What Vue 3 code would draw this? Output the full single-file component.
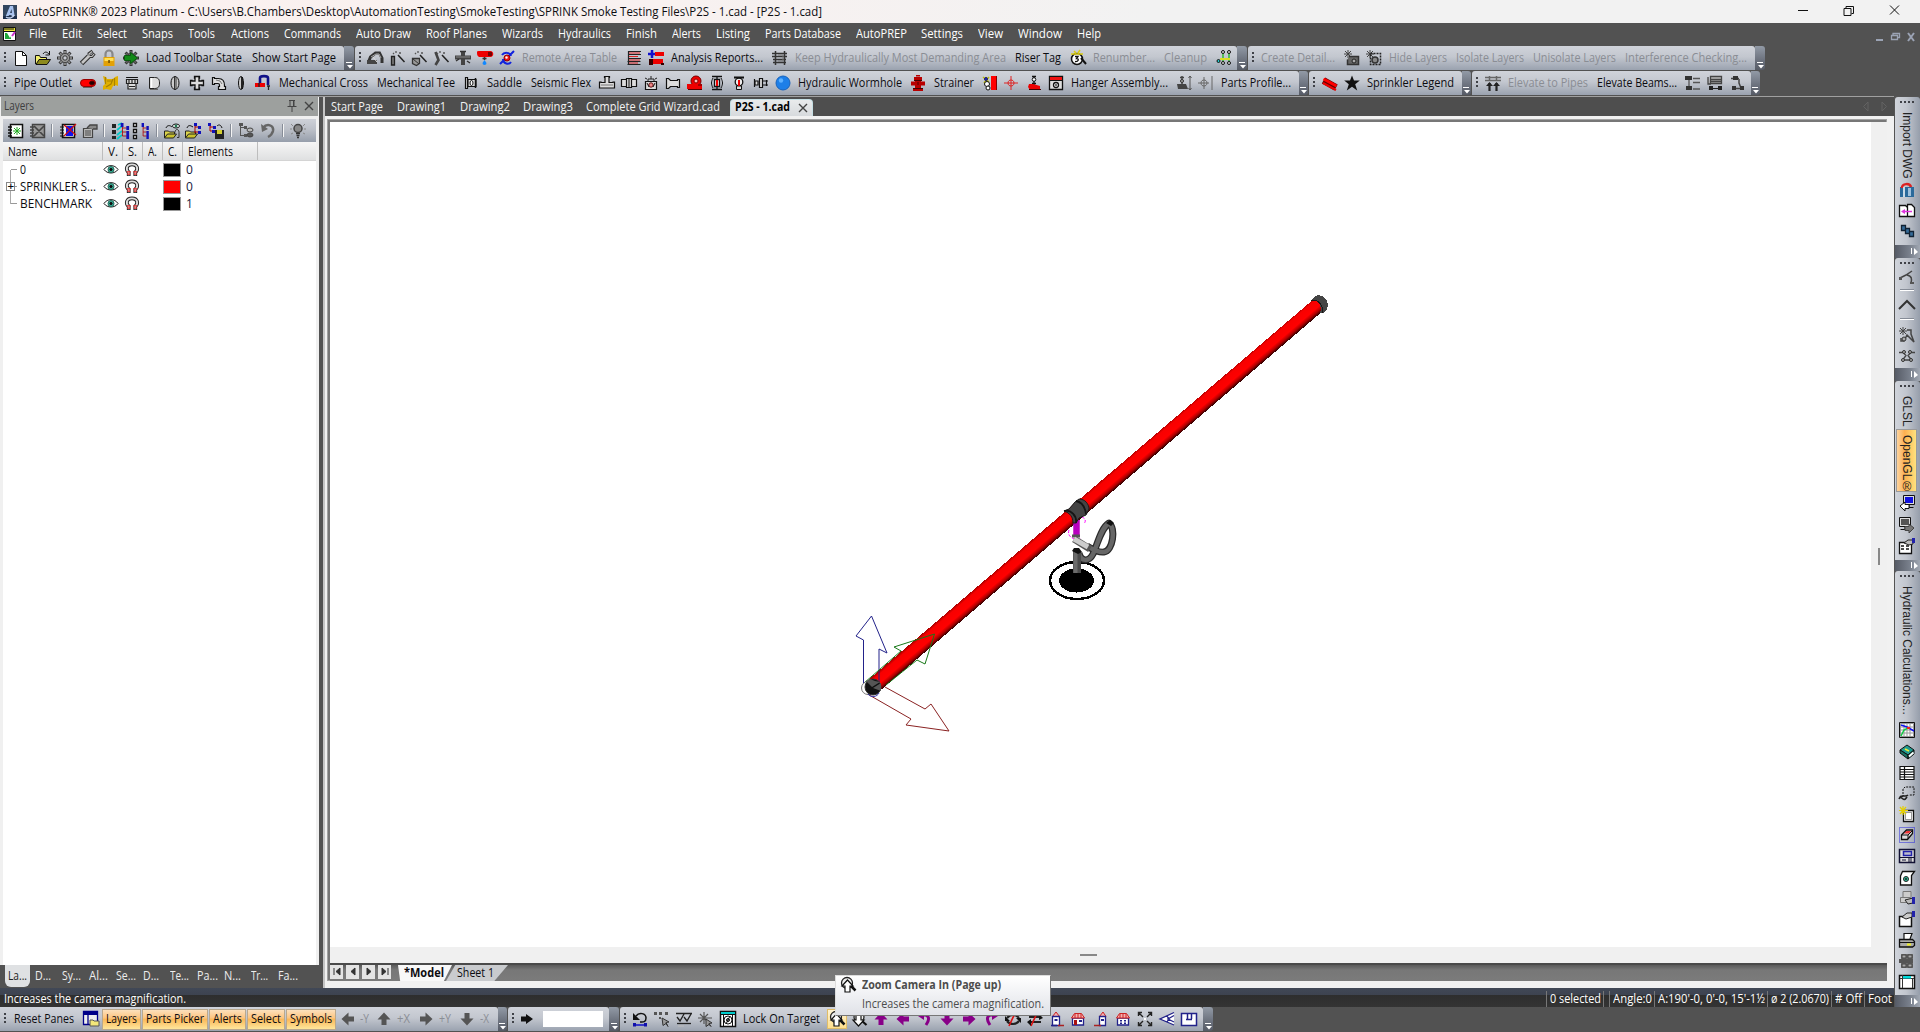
<script setup>
const vFit = {
  mounted(el, { value }) {
    const natural = el.getBoundingClientRect().width
    if (natural) el.style.transform = `scaleX(${value / natural})`
  },
}

const p = (d, f = 'none', s = '#111', w = 1) => `<path d="${d}" fill="${f}" stroke="${s}" stroke-width="${w}"/>`
const b = (d, f = '#111') => `<path d="${d}" fill="${f}"/>`
const c = (x, y, r, f = 'none', s = '#111', w = 1) => `<circle cx="${x}" cy="${y}" r="${r}" fill="${f}" stroke="${s}" stroke-width="${w}"/>`
const e = (x, y, rx, ry, f = 'none', s = '#111') => `<ellipse cx="${x}" cy="${y}" rx="${rx}" ry="${ry}" fill="${f}" stroke="${s}"/>`

const gear = (col, hole) => p('M8 0V16M0 8H16M2.500 2.500L13.500 13.500M13.500 2.500L2.500 13.500', 'none', '#333', 3) + p('M8 1V15M1 8H15M3.200 3.200L12.800 12.800M12.800 3.200L3.200 12.800', 'none', col, 1.600) + c(8, 8, 4.600, col, '#333', .8) + c(8, 8, 2.200, hole, '#333')
const wand = p('M7 1v2M10 3h2M4 3l1 1', 'none', '#555', 1.300) + p('M9 5l6.500 7', 'none', '#222', 1.500)
const tree = (col) => p('M3.500 2v11M3.500 5h6M3.500 9h6M3.500 13h6', 'none', '#a00') + b('M1 0h4v4H1zM9 3h4v4H9zM9 8h4v4H9zM9 12h4v4H9z', col)
const folder = p('M.500 15v-7h4l1 1h5v2', '#dcd44a', '#222') + p('M.500 15l3-4h9l-3 4z', '#c9c22e', '#222')
const arrow = (deg, col) => `<g transform="rotate(${deg} 8 8)">` + b('M8 1.500l6.500 7h-4v5.500h-5V8.500h-4z', col) + '</g>'
const house = (x) => p('M2.500 7h11v7h-11z', '#fff', '#22228a', 1.300) + p('M1.500 7l3-4.500h7l3 4.500z', '#f5b0b0', '#c22') + p('M5 3v4M8 3v4M11 3v4', 'none', '#c22') + b(x, '#22228a')
const monitor = (col) => p('M4.500 .5h11v9h-11z', '#ddd') + b('M6 2h8v6H6z', col) + p('M10 10v2M6.500 12.500h8')

const icons = {
  app: b('M1 1h14v14H1z', '#34465f') + b('M3 14L8 2h3l2 12h-3l-.5-3H7l-1 3zM8 9h2l-.5-4z', '#a9c2ee') + b('M1 12h14v3H1z', '#1c2d4a') + p('M4 13c3 2 7 1 8-2', 'none', '#c8d6f2', 1.500),
  doc: p('M1.500 4.500h12v10h-12z', '#fff') + p('M1.500 1.500h12v4h-12z', '#e8e332') + b('M3 7h6v6H3z', '#1fa83a') + b('M5 7h6L8 12z', '#fff') + p('M13 6l-3 4', 'none', '#c3c', 2) + p('M3 2v2M5 2v2M7 2v2M9 2v2M11 2v2'),
  new: p('M2.500 1.500h7l4 4v10h-11z', '#fff') + p('M9.500 1.500v4h4'),
  open: p('M.5 14V5.500h4l1 2h6V10', '#f2ee6c') + p('M1 14.500l3-5h11.500l-3.500 5z', '#8d8a1d') + p('M8 4c2-3 4-2 6 0M14.500 1v4h-4'),
  gear: gear('#999', '#c6cad0'),
  wrench: p('M2.500 13.500l7-7', 'none', '#333', 5) + p('M13.500 1L10 3.500v3h3L15.500 3.500', 'none', '#333', 3) + p('M3 13l7-7', 'none', '#c4c4c4', 2.600) + p('M13 1.500L10 4v2.500h3L15 4', 'none', '#c4c4c4', 1.200),
  lock: p('M4.500 8V4a3.500 3.500 0 017 0v4', 'none', '#888', 2.200) + b('M2.500 7h11v9h-11z', '#e3a106') + b('M3.500 8h9v3h-9z', '#ffdf54') + b('M7.300 10h1.500v3h-1.500z', '#6b4b00'),
  gearGo: gear('#666', '#888') + p('M1.500 5.500h6V2.500L14.500 8l-7 5.500v-3h-6z', '#128a18', '#0b5a10'),
  arch: p('M1.500 12L3.500 7l5-4h4l2.500 5v5', 'none', '#333', 3) + p('M4 7l5-3h3l2 4', 'none', '#aaa') + b('M0 10h10v4H0z', '#444') + p('M6 7l4 5', 'none', '#ddd'),
  wandPipe: p('M2.500 6.500h3v8.500h-3z', '#777', '#222', 1.300) + wand,
  wandBox: p('M1.500 8.500h7v5l-3 2-4-2z', '#999', '#333', 1.300) + p('M2 9l6 5', 'none', '#333') + wand,
  wandBend: p('M2.500 15l3-5-3-8', 'none', '#444', 2.600) + wand,
  cross3: p('M8 1v14M0 7.500h16', 'none', '#444', 4) + p('M1 7h14', 'none', '#888') + p('M5 1.500h6M1 11l3-2M12 11l3 2', 'none', '#333', 1.500),
  drip: b('M0 1.500A2.500 2.500 0 012 1h12c3 1 3 5 0 6H2C0 6 0 4 0 2z', '#e00') + b('M11 2h4v4h-4z', '#700') + p('M7.500 7v3M5.500 8.500h4', 'none', '#333', 1.500) + b('M7.500 10l2 3a2 2 0 01-4 0z', '#18f'),
  node: p('M1 14L6 9M10 6l5-5M3 5c2-3 8-3 9 1M4 9c0 5 6 6 8 3', 'none', '#12d', 2) + c(8, 8, 3, '#e11', '#900') + c(7.500, 7.500, 1, '#fff', '#fbb'),
  table: p('M2 1.500h13M2 4.500h13M2 8.500h13M1.500 11.500h13M1.500 14.500h13M2.500 1v13', 'none', '#222', 1.200) + p('M3 3h11M3 6.500h9M3 10h11M3 13h9', 'none', '#d22'),
  plus: p('M4 0v8M0 4h8', 'none', '#11c', 2.500) + b('M7 2h9v4H7zM1 9h14v5H1z', '#e00') + b('M1 9h4v6H1zM13 13h3v2h-3z', '#300'),
  grid: p('M3.500 1v14M12.500 1v14M0 3.500h15M0 6.500h15M1 9.500h13M1 12.500h13', 'none', '#333', 1.500) + p('M6 5h5v6H6', 'none', '#777'),
  tag: c(7, 9, 5.500, '#fff', '#111', 1.500) + p('M5 6.500h3l-1.500 2c3 0 2 3.500-1.500 3', 'none', '#111', 1.300) + p('M11 8l5 6', 'none', '#111', 2) + p('M4 1l2 2M10 0L8 3M1 4h12', 'none', '#d9cc10', 1.500),
  valves: p('M6 3v9M12 3v9', 'none', '#3b3', 1.500) + p('M3 9h10', 'none', '#dd2', 2) + c(6, 2, 1.500, '#ddd') + c(12, 2, 1.500, '#ddd') + c(6, 13, 1.500, '#ddd') + c(12, 13, 1.500, '#ddd') + c(1.500, 11, 1.500, '#2cc'),
  starBox: p('M4 0v8M0 4h8M1 1l6 6M7 1L1 7', 'none', '#444') + p('M5 6.500h9.500v8H3.500v-5', '#666', '#333', 1.500) + c(10, 11, 2, '#aaa', '#222'),
  starSel: p('M4 0v8M0 4h8M1 1l6 6M7 1L1 7', 'none', '#444') + '<path d="M4.500 3.500h10v11h-10z" fill="none" stroke="#222" stroke-dasharray="2 1" stroke-width="1.500"/>' + c(9, 10, 3, '#888', '#333', 1.500),
  pipe: '<rect x=".5" y="4.500" width="15" height="7" rx="3.500" fill="#f00" stroke="#900"/>' + e(12, 8, 2.500, 2, '#200', '#500') + p('M3 12.500h9', 'none', '#666'),
  ytee: b('M1 1l3 1 1 2h6l2-2 3-1v10l-3-1-2 1-2 4-5-1-3 1V11l2-2z', '#e0b000') + p('M3.500 2v7M12.500 3v8M4 12l5-3 2-5M5 6h5', 'none', '#a98200', 1.200),
  cap: p('M2.500 4.500h11v4h-11zM4 9v5h8V9M2 2.500h12M5 5v3M8 5v3M11 5v3M5 11.500h6', '#ddd', '#222', 1.200) + p('M3 2.500h10'),
  plug: p('M3.500 2.500h5c4 0 5 2 5 5.500s-1 5.500-5 5.500h-5z', '#ddd', '#222') + p('M5.500 3v10', 'none', '#fff', 1.500) + p('M4 14.500h8', 'none', '#666'),
  ring: e(8, 8, 4, 6.500, '#ccc') + p('M7.500 2v12M9 2v12', 'none', '#333'),
  fcross: p('M5.500 1.500h5V3H10v3h3v-.5h1.500v5H13V10h-3v3h.5v1.500h-5V13H6v-3H3v.5H1.500v-5H3V6h3V3h-.5z', '#ddd', '#111', 1.300),
  elbow: p('M1.500 2.500h2v1h4c4 0 6 3 6 7v1h1v3h-7v-3h1V10C8.500 9 8 8.500 7 8.500H3.500v1h-2z', '#ddd', '#111', 1.200) + p('M5 5l4 1 2 3', 'none', '#777'),
  flange: e(8, 8, 2.500, 6.500, '#ccc') + p('M9 2v12', 'none', '#111', 1.800),
  hook: p('M5 8V3c0-2.500 8-2.500 8 0v7', 'none', '#118', 2.600) + b('M0 8h10v4H0z', '#e00') + p('M4 8v4M12 11h3M13.500 11v4', 'none', '#222', 1.300),
  saddle: p('M2.500 2.500h2v11h-2zM5 4.500h8v7H5z', '#ddd', '#111', 1.200) + p('M12.500 3v10', 'none', '#111', 1.500) + e(8.500, 8, 1.500, 2.500, '#fff'),
  tee: p('M5.500 1.500h5v1H10v5h4v-.5h1.500v6h-15V7H2v.5h4v-5h-.5z', '#ddd', '#111', 1.200) + p('M2 10h12', 'none', '#777'),
  coup: p('M.5 4.500h5v7h-5zM5.500 3.500h5v9h-5zM10.500 4.500h5v7h-5z', '#ddd', '#111', 1.200) + p('M8 4v8'),
  valve: p('M2.500 6.500h11v8h-11z', '#ddd', '#111', 1.200) + p('M5 6V4h6v2M8 4V1M2 3l2 1M14 3l-2 1', 'none', '#222') + c(8, 10, 2.200, '#e88', '#611') + p('M4 8l2 4M12 8l-2 4'),
  reducer: p('M1.500 3.500h2l2 2h7v-1h2v8h-2v-1h-7l-2 2h-2z', '#ddd', '#111', 1.200),
  pump: c(9, 6, 5, '#e00', '#700') + b('M0 9h15v5H0z', '#e00') + p('M1 14.500h14M11 10h4', 'none', '#500') + c(9, 6, 2, '#fbb', '#800'),
  sprk: p('M3 1.500h10M8 1v3M5.500 4.500h5v7h-5zM8 11v3M3 14.500h10', '#eee', '#111', 1.300) + p('M8 5v6', 'none', '#e00', 2) + p('M4 3c-2 4-2 6 0 10M12 3c2 4 2 6 0 10'),
  sprk2: p('M3 2.500h10M8 2v2', 'none', '#111', 2) + c(8, 7, 3.800, '#eee', '#111', 1.300) + p('M5.500 11h5v3.500h-5z', '#ddd') + p('M8 5v6', 'none', '#e00', 2),
  nipple: p('M1.500 4v8M2 6h3v4H2zM6.500 3.500h3v9h-3zM10 6h5M10 10h5M13.500 5v6', '#ddd', '#111', 1.200),
  ball: c(8, 8, 7, '#1d7fe8', '#1763bd') + c(6, 5.500, 2.200, '#5db1ff', 'none'),
  hydrant: b('M6 0h4v1.500H6zM4 2h8v3H4zM5 5h6v8H5zM3 13h10v3H3zM1 6.500h14v4H1z', '#b80000') + p('M4 5.500h8M8 7v3M3 13.500h10', 'none', '#400'),
  wallsp: b('M9 1h5v14H9z', '#f00') + p('M14.500 1v14', 'none', '#800') + p('M1 2l6 5M7 2L2 8', 'none', '#bb0', 1.500) + c(5, 9, 2.500, '#fff') + c(4, 4, 1.500, '#22c', '#225') + c(6, 13, 2, '#fff'),
  target: p('M8 1v14M1 8h14M5 8c0-4 6-4 6 0s-6 4-6 0', 'none', '#d22'),
  valveR: p('M8 1v9M6 1.500h4M6 8.500h4', 'none', '#111', 1.300) + c(8, 4.500, 1.800, '#fff') + b('M3 9l4 0 7 2v4H4L2 12z', '#e00') + p('M3 14.500h12', 'none', '#400'),
  hangWin: p('M1.500 1.500h13v13h-13z', '#ddd', '#111', 1.300) + b('M2 2h12v3H2z', '#e11') + p('M1 5.500h14') + c(8, 10, 2.500, '#fff', '#111', 1.300) + c(8, 10, .5),
  hangDim: p('M6 1v9M4 2.500h4', 'none', '#444', 1.500) + c(6, 6, 1.500, '#aaa', '#333') + b('M1 9h9l2 5H2z', '#444') + p('M14 1v14M12.500 3l1.500-2 1.500 2M12.500 13l1.500 2 1.500-2', 'none', '#555'),
  crossDim: p('M6 2v12M0 8h11M3 8c0-4 6-4 6 0s-6 4-6 0M14 1v14', 'none', '#666'),
  redBeam: p('M1.500 5.500l12.500 7', 'none', '#600', 7) + p('M1.500 4l13 7', 'none', '#f00', 3) + p('M1 8l13 7', 'none', '#e00', 2),
  star: b('M8 .5l2 5h5.800l-4.600 3.700 2 6.300-5.200-3.800-5.200 3.800 2-6.300L.2 5.500H6z'),
  elev: p('M0 2.500h16M0 5.500h16M4.500 1v5M11.500 1v5', 'none', '#666', 1.500) + p('M4.500 8v8M11.500 8v8', 'none', '#222', 2.200) + b('M1 11l3.500-4L8 11zM8 11l3.500-4 3.500 4z', '#222'),
  list1: b('M0 1h7v4H0zM1 11h6v4H1z', '#333') + p('M8 3.500h7M8 7.500h7M8 14h7M4 5v6', 'none', '#555', 1.300),
  list2: p('M3.500 1.500h11v7h-11zM4 4.500h10M4 6.500h10M1 2v7h3', '#bbb', '#444', 1.300) + p('M3 13.500h10', 'none', '#222') + b('M2 11h4v4H2zM11 11h4v4h-4z', '#222'),
  list3: p('M2 3.500h8M10 4v4l2 5M5 13.500h9', 'none', '#444', 1.500) + b('M4 1h5v4H4zM3 11h4v4H3zM11 11h4v4h-4z', '#333'),
  layNew: p('M2.500 1.500h12v13h-12z', '#fff', '#111', 1.500) + p('M0 4h4M0 7h4M0 10h4M0 13h4', 'none', '#111', 1.300) + p('M9 4v8M5 8h8M6 5l6 6M12 5l-6 6', 'none', '#2a2'),
  layDel: p('M2.500 1.500h12v13h-12z', '#999', '#444', 1.500) + p('M0 4h4M0 7h4M0 10h4M0 13h4M4 3l10 10M14 3L4 13', 'none', '#444', 1.700),
  layBlue: p('M2.500 1.500h12v13h-12z', '#eee', '#111', 1.500) + b('M6 3h7v10H6z', '#11e') + p('M4 2l12 10M16 1L4 13', 'none', '#c11', 1.300) + p('M0 4h4M0 7h4M0 10h4M0 13h4'),
  props: p('M1.500 5.500h9v9h-9zM3 8h6M3 10h6M3 12h6', '#bbb', '#444', 1.200) + p('M5 5l3-3h7v4h-4', '#888', '#444', 1.300),
  chk: p('M6 2l4-2M5 7l5-4M5 12l5-4M5 16l5-4', 'none', '#0cc', 1.700) + b('M0 1h4v4H0zM0 7h4v4H0zM0 13h4v3H0z', '#222') + '<g transform="translate(8 0) scale(.7 1)">' + tree('#11b') + '</g>',
  lst: p('M.5 .5h3v3h-3zM.5 6.500h3v3h-3zM.5 12.500h3v3h-3z', '#fff', '#111', 1.300) + '<g transform="translate(8 0) scale(.6 1)">' + tree('#11b') + '</g>',
  foldEye: folder + p('M2 5c1-3 4-3 6-1') + e(12, 3, 3.500, 2, '#fff') + c(12, 3, 1, '#2a6', '#164') + p('M11 9.500c0-4 4-4 4 0v5h-2', 'none', '#333'),
  foldTree: folder + p('M2 5c1-3 3-3 6-1') + p('M10 2v8M10 4h4M10 9h4', 'none', '#a00') + b('M9 0h3v3H9zM13 3h3v3h-3zM13 8h3v3h-3z', '#11b'),
  saveTree: p('M2 1v7M2 4h4M2 8h4', 'none', '#a00') + b('M0 0h3v3H0zM5 3h3v3H5zM4 7h3v3H4z', '#11b') + b('M7 7h9v9H7z', '#222') + b('M9 7h5v4H9z', '#d4cf30') + p('M9 3c2-2 4-1 5 2'),
  treeEye: p('M2.500 1v12M2 4.500h5M2 12.500h5', 'none', '#555') + b('M1 0h4v3H1zM6 3h3v3H6zM6 11h3v3H6z', '#555') + e(12, 7, 3, 2, '#bbb', '#444') + e(12, 12, 3, 2, '#555', '#444'),
  undoG: p('M3 5c4-5 11-3 10 3-1 4-3 5-5 6', 'none', '#666', 2.500) + b('M1 1l1 8 6-3z', '#666'),
  bulb: c(8, 5.500, 4, '#888', '#444', 1.500) + p('M6 10.500h4M6.500 12.500h3M7 14.500h2', 'none', '#333', 1.500) + p('M1 1l2 2M15 1l-2 2M0 6h2M14 6h2M1 11l2-1M15 11l-2-1', 'none', '#888'),
  eye: p('M.5 8C4 2.500 12 2.500 15.500 8 12 13 4 13 .5 8z', '#fff') + c(8, 8, 3.200, '#3cb8a0', '#186050') + c(8, 8, 1.300, '#111'),
  magnet: p('M4.500 15V11C1 8 2 2.500 8 2.500s7 5.500 3.500 8.500v4', 'none', '#222', 4) + p('M4.500 14V11C1 8 2 2.500 8 2.500s7 5.500 3.500 8.500v3', 'none', '#ddd', 2) + p('M2.500 10.500h4M9.500 10.500h4M3 13h3M10 13h3', 'none', '#e22', 1.300),
  pin: p('M5 2.500h6M6 2.500v6M10 2.500v6M3.500 8.500h9M8 9v5M9.500 3v5', 'none', '#444'),
  x: p('M4 4l8 8M12 4l-8 8', 'none', '#444', 1.400),
  dwg: b('M1 5h14v10H1z', '#2b6a9b') + b('M9 6h3v8H9z', '#9fc0dc') + p('M3 6c0-5 8-5 9-1', 'none', '#d22', 2.500) + p('M5 5v10', 'none', '#fff', 1.500),
  pages: p('M.5 2.500h6l2 2v9h-8zM8.500 1.500h4l3 3v9h-7z', '#fff', '#111', 1.300) + p('M4 8.500h9', 'none', '#d3d', 1.500) + b('M6 6v5L2 8.500z', '#d3d'),
  boxes: p('M2.500 2.500h4v5h-4zM6.500 5.500h4v5h-4zM10.500 8.500h4v5h-4z', '#356b99', '#123', 1.300),
  bend: p('M1 9l6-3 6-4M8 6c5 1 5 4 4 8', 'none', '#444', 1.500) + b('M0 8h3v3H0zM11 13h4v2h-4z', '#555'),
  chevUp: p('M0 13l8-8 8 8', 'none', '#333', 2),
  magic: p('M4 0v8M0 4h8M1 1l6 6M7 1L1 7', 'none', '#444') + p('M8 3h4v4l3 8-7-7-3 6H2v-3', 'none', '#444', 1.500) + c(5, 12, 2, '#aaa', '#333'),
  nodes: p('M0 4.500h4l3 3-3 4M16 4.500h-4l-3 3 3 4M4 12h8', 'none', '#444', 1.300) + c(5, 4, 1.500, '#aaa', '#333') + c(11, 4, 1.500, '#aaa', '#333') + c(4, 12, 1.500, '#aaa', '#333') + c(12, 12, 1.500, '#aaa', '#333'),
  monL: monitor('#11d') + p('M1 11l5-4v2.500h4v4H6V16z', '#fff'),
  monR: `<g transform="translate(16 0) scale(-1 1)">${monitor('#555')}${p('M1 11l5-4v2.500h4v4H6V16z', '#777', '#444')}</g>`,
  formHand: p('M.5 4.500h12v11H.500zM2 8h3M2 11h3M7 8h3M7 11h3', '#fff', '#111', 1.300) + p('M5 5l4-3h5v4l-4 1z', '#bbb', '#222') + b('M13 0h3v5h-3z', '#22a'),
  chart: p('M1.500 1.500h13v13h-13zM1 5h14M1 8h14M1 11h14M5 1v14M8 1v14M11 1v14', '#fff', '#999') + p('M.5 .5h15v15H.500z', 'none', '#111') + p('M2 3l6 2 7 4', 'none', '#11e', 1.500) + p('M2 14l3-6 4-2', 'none', '#1c4', 1.500) + b('M8 5h3v2H8z', '#e22'),
  book: p('M1 6l7-5 7 5-6 5z', '#1f9a90') + p('M1 6v3l8 6v-4zM9 11v4l6-5V6z', '#187060', '#111') + p('M6 5l4 2', 'none', '#ee3', 1.800) + p('M10 12.500l4.500-4', 'none', '#fff', 1.800),
  sheet: p('M1 1.500h14v13H1zM1 4.500h14M1 7h14M1 9.500h14M1 12h14M5.500 1v14', '#fff', '#111', 1.200),
  lasso: '<path d="M4 9V4l2-2h9v8h-5" fill="none" stroke="#111" stroke-dasharray="2 1"/>' + p('M0 14c3-6 6-1 9-4M1 11c4 5 5 4 7 1', 'none', '#222', 1.600),
  newSel: p('M4.500 4.500h10v11h-10z', '#fff', '#111', 1.300) + '<path d="M6.500 6.500h6v7h-6z" fill="none" stroke="#333" stroke-dasharray="1 1"/>' + p('M4 0v9M0 4.500h9M1 1l6 7M7 1L1 8', 'none', '#e5cf00', 1.200),
  eraser: '<path d="M.5 .5h15v15H.500z" fill="none" stroke="#22d" stroke-dasharray="1 1"/>' + p('M2.500 8l5-5h6v3.500l-5 6h-6z', '#ddd', '#111', 1.300) + b('M5 6.500l2.500-2.500H12L10 6.500z', '#e33') + p('M3 8h6l4-4M9 8v4'),
  fax: p('M.5 1.500h15v13H.500z', '#ddd', '#113', 1.500) + p('M4.500 3.500h8v4h-8z', '#bbc', '#22a', 1.500) + p('M0 9.500h16M3 12h4M9 11h4M9 13h4', 'none', '#113', 1.200),
  pageEye: p('M3.500 1.500h12l-3 4v9.500h-11v-9z', '#fff', '#111', 1.300) + c(7, 9, 2.500, '#3b9', '#222') + c(7, 9, .6),
  printHand: p('M4 7V1.500h8V7M1.500 7.500h10v5h-10z', '#ccc', '#777') + p('M6 10l3 4 5-1V8z', '#bbb', '#222') + b('M13 7h3v7h-3z', '#22a'),
  propHand: p('M.5 5.500h12v10H.500z', '#fff', '#111', 1.500) + p('M3 6l5-4h5v4l-6 2z', '#ccc', '#222') + b('M13 0h3v6h-3z', '#22a'),
  printer: p('M5 7V1.500h8L11 7', '#fff', '#111', 1.200) + p('M.5 7.500h13l2 2v4l-2 1.500H.500z', '#aaa', '#111', 1.300) + p('M0 10.500h15') + b('M8 11.500h4v2H8z', '#ee2'),
  plugs: b('M2 1h12v14H2z', '#666') + p('M3 2h4v3H3zM9 2h4v3H9zM3 11h4v3H3zM9 11h4v3H9z', '#aaa', '#444') + b('M0 6h14v4H0z', '#555'),
  win: p('M.5 1.500h15v13H.500z', '#fff', '#111', 1.500) + p('M3.500 1v13M13.500 4v10M1 4.500h14', 'none', '#333') + b('M4 2h8v2.500H4z', '#0dd'),
  panes: p('M.5 .5h14v13H.500zM5 3v10', '#eee', '#008', 1.300) + b('M1 1h13v3H1z', '#008') + p('M7 15V9h3l1 1h5v5z', '#f3e77a', '#555'),
  left: arrow(-90, '#555'), up: arrow(0, '#555'), right: arrow(90, '#555'), down: arrow(180, '#555'),
  go: b('M2 5.500h5V3l7 5-7 5v-2.500H2z'),
  mUp: arrow(0, '#808'), mLeft: arrow(-90, '#808'), mDown: arrow(180, '#808'), mRight: arrow(90, '#808'),
  mBack: p('M4 5c7-3 10 2 5 9', 'none', '#808', 3) + b('M1 5l6-4v8z', '#808'),
  mFwd: p('M12 5C5 2 2 7 7 14', 'none', '#808', 3) + b('M15 5L9 1v8z', '#808'),
  undo: p('M4 5c3-4 10-3 10 2s-4 4-6 4', 'none', '#111', 1.500) + b('M1 2v7h7z') + p('M2 14h12', 'none', '#11c', 1.500) + b('M1 12h3v3.500H1zM12 12h3v3.500h-3z', '#11a'),
  dots: b('M0 1h3v3H0zM5 1h3v3H5zM11 1h3v3h-3zM5 6h2v2H5z', '#555') + p('M8 7l7 4-3 .5 2 4-2-3-3 2z', '#999', '#333'),
  checks: p('M0 2.500h16M1 6l3 4 4-7M8 6l3 4 4-7', 'none', '#222', 1.300) + p('M1 12.500h14', 'none', '#222', 1.300) + p('M2 15h6', 'none', '#bbb'),
  burst: p('M6 1v12M0 7h14M2 3l8 8M10 3l-8 8', 'none', '#555', 1.200) + p('M8 8l6 4-3 .5 2 3-2-2-3 2z', '#999', '#333'),
  lockOn: p('M.5 .5h15v15H.500z', '#fff', '#111', 1.500) + b('M1 1h14v2H1z', '#0cc') + p('M3.500 3v12M12.500 3v12M1 3.500h14') + e(8, 9, 4, 4) + c(8, 9, 1.500, '#999') + p('M10 5l-4 8'),
  zoomIn: c(7, 6, 5.500, '#eee', '#222', 1.300) + p('M11 9l4.500 4.500', 'none', '#111', 2.500) + p('M7.500 3l5.500 6h-3v6H5V9H2z', '#fff', '#111', 1.200),
  zoomOut: c(8, 6, 5, '#eee', '#222', 1.300) + p('M11 10l4.500 4', 'none', '#111', 2.200) + p('M7.500 15l5.500-6h-3V4H5v5H2z', '#fff', '#111', 1.200),
  rotA: p('M2 7c3-4 9-4 12 0M14 10c-3 4-9 4-12 0', 'none', '#222', 2.200) + p('M11 0L4 15', 'none', '#d11', 1.600) + b('M0 5v5h5zM16 12V7h-5z'),
  rotB: p('M2 6h11M3 11h11', 'none', '#222', 2.200) + p('M11 0L4 15', 'none', '#d11', 1.600) + b('M12 3l4 4-4 2zM4 8l-4 3 4 4z'),
  h1: p('M4.500 5.500l3.500-4.500 3.500 4.500z', '#f5b0b0', '#c22') + p('M4.500 5.500h7v9h-7z', '#fff', '#22228a', 1.300) + b('M6.500 8h3v2h-3z', '#22228a') + p('M3 14.500h6', 'none', '#22228a', 1.500) + p('M10 14.500h6', 'none', '#a22', 1.500),
  h2: house('M9 9h3v2H9z') + b('M4 9h3v5H4z', '#a11'),
  h3: p('M6.500 5.500L10 1l3 4.500z', '#f5b0b0', '#c22') + p('M6.500 5.500h6v9h-6z', '#fff', '#22228a', 1.300) + b('M8 8h3v2H8z', '#22228a') + p('M1 14.500h7', 'none', '#a22', 1.500),
  h4: house('M5 9h2v1.500H5zM9 9h2v1.500H9zM5 11.500h2V13H5zM9 11.500h2V13H9z'),
  extents: p('M1.500 5V1.500H5M11 1.500h3.500V5M14.500 11v3.500H11M5 14.500H1.500V11M2 2l4 4M14 2l-4 4M2 14l4-4M14 14l-4-4', 'none', '#222', 1.400) + b('M7 7h2v2H7z', '#fff'),
  iso: p('M15 1.500L1 8l14 6M15 4.500L9 8l6 3M8 5l2 3-2 3', '#fff', '#22228a', 1.300),
  plan: p('M.5 2.500h15v12H.500zM6.500 2v6M5 8.500h6M10.500 2v6', '#fff', '#22228a', 1.500),
}

const I = (n, at, z = 16) => ({ n, a: at - z / 2, z: at + z / 2 })
const T = (s, a, z, cls = '') => ({ s, a, z, cls })
const S = (at) => ({ sep: true, a: at, z: at + 1 })
const lay = (start, items) => {
  let cur = start
  return items.map((it) => {
    const o = { ...it, gap: it.a - cur, size: it.z - it.a }
    cur = it.z
    return o
  })
}
const bar = (a, z, cap, items) => ({ w: z - a, cap, items: lay(a + 9, items) })
const seq = (names, xs) => names.split(' ').map((n, i) => I(n, xs[i]))

const menu = lay(0, [I('doc', 10), T('File', 29, 47), T('Edit', 62, 82), T('Select', 97, 127), T('Snaps', 142, 173), T('Tools', 188, 215), T('Actions', 231, 269), T('Commands', 284, 341), T('Auto Draw', 356, 411), T('Roof Planes', 426, 487), T('Wizards', 502, 543), T('Hydraulics', 558, 611), T('Finish', 626, 657), T('Alerts', 672, 701), T('Listing', 716, 750), T('Parts Database', 765, 841), T('AutoPREP', 856, 907), T('Settings', 921, 963), T('View', 978, 1003), T('Window', 1018, 1062), T('Help', 1077, 1101)])

const row1 = [
  bar(0, 344, 10, [...seq('new open gear wrench lock gearGo', [21, 43, 65, 87, 109, 131]), T('Load Toolbar State', 146, 242), T('Show Start Page', 252, 336)]),
  bar(355, 1237, 10, [...seq('arch wandPipe wandBox wandBend cross3 drip node', [375, 397, 419, 441, 463, 485, 507]), T('Remote Area Table', 522, 617, 'dim'), I('table', 634), I('plus', 656), T('Analysis Reports...', 671, 763), I('grid', 780), T('Keep Hydraulically Most Demanding Area', 795, 1006, 'dim'), T('Riser Tag', 1015, 1061), I('tag', 1078), T('Renumber...', 1093, 1155, 'dim'), T('Cleanup', 1164, 1207, 'dim'), I('valves', 1225)]),
  bar(1248, 1755, 10, [T('Create Detail...', 1261, 1335, 'dim'), I('starBox', 1352), I('starSel', 1374), T('Hide Layers', 1389, 1447, 'dim'), T('Isolate Layers', 1456, 1524, 'dim'), T('Unisolate Layers', 1533, 1616, 'dim'), T('Interference Checking...', 1625, 1747, 'dim')]),
]
const row2 = [
  bar(0, 1299, 9, [T('Pipe Outlet', 14, 72), ...seq('pipe ytee cap plug ring fcross elbow flange hook', [88, 110, 132, 154, 175, 197, 219, 241, 263]), T('Mechanical Cross', 279, 368), T('Mechanical Tee', 377, 455), I('saddle', 471), T('Saddle', 487, 522), T('Seismic Flex', 531, 591), ...seq('tee coup valve reducer pump sprk sprk2 nipple ball', [607, 629, 651, 673, 695, 717, 739, 761, 783]), T('Hydraulic Wormhole', 798, 902), I('hydrant', 918), T('Strainer', 934, 974), ...seq('wallsp target valveR hangWin', [990, 1011, 1034, 1056]), T('Hanger Assembly...', 1071, 1168), I('hangDim', 1184), I('crossDim', 1206), T('Parts Profile...', 1221, 1291)]),
  bar(1309, 1462, 9, [I('redBeam', 1330), I('star', 1352), T('Sprinkler Legend', 1367, 1454)]),
  bar(1472, 1751, 9, [I('elev', 1493), T('Elevate to Pipes', 1508, 1588, 'dim'), T('Elevate Beams...', 1597, 1677), I('list1', 1693), I('list2', 1715), I('list3', 1737)]),
]
const H = (n, at) => ({ ...I(n, at, 20), hot: true })
const row3 = [
  bar(0, 498, 9, [T('Reset Panes', 14, 74), I('panes', 91), T('Layers', 102, 141, 'on'), T('Parts Picker', 142, 208, 'on'), T('Alerts', 209, 246, 'on'), T('Select', 247, 285, 'on'), T('Symbols', 286, 336, 'on'), I('left', 348), T('-Y', 360, 369, 'dim'), I('up', 384), T('+X', 397, 410, 'dim'), I('right', 426), T('+Y', 439, 451, 'dim'), I('down', 467), T('-X', 480, 489, 'dim')]),
  bar(508, 609, 10, [I('go', 527), { box: true, a: 543, z: 603 }]),
  bar(620, 1203, 10, [...seq('undo dots checks burst lockOn', [640, 662, 684, 706, 728]), T('Lock On Target', 743, 820), H('zoomIn', 837), ...seq('zoomOut mUp mLeft mBack mDown mRight mFwd rotA rotB h1 h2 h3 h4 extents iso plan', [859, 881, 903, 925, 947, 969, 991, 1013, 1035, 1056, 1078, 1101, 1123, 1145, 1167, 1189])]),
]
const side = [
  bar(97, 245, 13, [T('Import DWG', 113, 177), ...seq('dwg pages boxes', [191, 212, 232])]),
  bar(258, 368, 13, [I('bend', 278), S(291), I('chevUp', 305), S(320), I('magic', 336), I('nodes', 357)]),
  bar(381, 560, 11, [T('GLSL', 397, 427), T('OpenGL®', 430, 493, 'on'), ...seq('monL monR formHand', [504, 526, 547])]),
  bar(571, 995, 12, [T('Hydraulic Calculations...', 587, 717), ...seq('chart book sheet lasso newSel eraser fax pageEye printHand propHand printer plugs win', [731, 753, 774, 794, 815, 836, 857, 879, 899, 920, 941, 962, 983])]),
]
const layerTools = lay(3, [I('layNew', 16), I('layDel', 38), S(52), I('layBlue', 68), I('props', 90), S(104), I('chk', 120), I('lst', 141), S(157), I('foldEye', 172), I('foldTree', 193), I('saveTree', 216), S(231), I('treeEye', 246), I('undoG', 268), S(283), I('bulb', 298)])
const columns = [['Name', 100, 29], ['V.', 20, 10], ['S.', 20, 9], ['A.', 20, 9], ['C.', 20, 9], ['Elements', 75, 45]]
const layers = [['0', 6, '#000', '0'], ['SPRINKLER S...', 76, '#f00', '0'], ['BENCHMARK', 72, '#000', '1']]
const paneTabs = lay(0, [T('La...', 8, 27, 'cur'), T('D...', 35, 51), T('Sy...', 62, 81), T('Al...', 89, 108), T('Se...', 116, 136), T('D...', 143, 159), T('Te...', 170, 189), T('Pa...', 197, 218), T('N...', 224, 241), T('Tr...', 251, 268), T('Fa...', 278, 298)])
const docTabs = lay(325, [T('Start Page', 331, 383), T('Drawing1', 397, 446), T('Drawing2', 460, 510), T('Drawing3', 523, 573), T('Complete Grid Wizard.cad', 586, 720)])
const status = [['0 selected', 57, 51], ['', 6, 0], ["Angle:0", 45, 39], ["A:190'-0, 0'-0, 15'-1½", 113, 107], ['ø 2 (2.0670)', 64, 58], ['# Off', 33, 27], ['Foot', 29, 24]]
const nav = ['M4 3v7M10 3L6 6.500l4 3.500z', 'M9 3L5 6.500l4 3.500z', 'M5 3l4 3.500L5 10z', 'M4 3l4 3.500L4 10zM10 3v7']
const strips = [row1, row2]
</script>

<template>
  <div class="app">
    <header class="title">
      <svg class="ic" viewBox="0 0 16 16" v-html="icons.app" />
      <span class="tx title-text"><i v-fit="798">AutoSPRINK® 2023 Platinum - C:\Users\B.Chambers\Desktop\AutomationTesting\SmokeTesting\SPRINK Smoke Testing Files\P2S - 1.cad - [P2S - 1.cad]</i></span>
      <svg class="winctl" width="110" height="23" viewBox="0 0 110 23" fill="none" stroke="#111">
        <path d="M4 10.500h10M50 8.500h7v7h-7zM52 8V6.500h7.500v7H57.500M96 5.500l9 9M105 5.500l-9 9" />
      </svg>
    </header>
    <nav class="menu">
      <template v-for="m in menu" :key="m.a">
        <svg v-if="m.n" class="ic" viewBox="0 0 16 16" :style="{ marginLeft: m.gap + 'px' }" v-html="icons[m.n]" />
        <span v-else class="tx" :style="{ marginLeft: m.gap + 'px', width: m.size + 'px' }"><i v-fit="m.size">{{ m.s }}</i></span>
      </template>
      <svg class="mdi" width="40" height="12" viewBox="0 0 40 12" fill="none" stroke="#9ba3b4">
        <path d="M1 9h7" stroke-width="2" /><path d="M16.500 4.500h6v4h-6zM18 4V2.500h6.500v4H23" stroke-width="1.300" /><path d="M33 2l6 8M39 2l-6 8" stroke-width="2" />
      </svg>
    </nav>

    <div v-for="(row, ri) in strips" :key="ri" class="strip">
      <template v-for="(s, si) in row" :key="si">
        <section class="seg" :style="{ width: s.w + 'px' }">
          <b class="grip"></b>
          <template v-for="it in s.items" :key="it.a">
            <svg v-if="it.n" class="ic" viewBox="0 0 16 16" :style="{ marginLeft: it.gap + 'px' }" v-html="icons[it.n]" />
            <span v-else class="tx" :class="it.cls" :style="{ marginLeft: it.gap + 'px', width: it.size + 'px' }"><i v-fit="it.size">{{ it.s }}</i></span>
          </template>
        </section>
        <div class="cap" :style="{ width: s.cap + 'px' }"><svg width="7" height="8" viewBox="0 0 7 8"><path d="M0 1.500h6" stroke="#fff" /><path d="M1 4h6L4 7.500z" fill="#fff" /></svg></div>
      </template>
    </div>

    <main class="main">
      <div class="work">
        <div class="body">
          <aside class="pane">
            <div class="pane-box">
              <div class="pane-title">
                <span class="tx" style="width: 30px"><i v-fit="30">Layers</i></span>
                <svg class="ic" viewBox="0 0 16 16" v-html="icons.pin" /><svg class="ic" viewBox="0 0 16 16" v-html="icons.x" />
              </div>
              <div class="pane-tools">
                <template v-for="it in layerTools" :key="it.a">
                  <svg v-if="it.n" class="ic" viewBox="0 0 16 16" :style="{ marginLeft: it.gap + 'px' }" v-html="icons[it.n]" />
                  <b v-else class="vsep" :style="{ marginLeft: it.gap + 'px' }"></b>
                </template>
              </div>
              <div class="cols">
                <span v-for="h in columns" :key="h[0]" class="col" :style="{ width: h[1] + 'px' }"><i v-fit="h[2]">{{ h[0] }}</i></span>
              </div>
              <div class="rows">
                <div v-for="(l, i) in layers" :key="i" class="lrow">
                  <span class="twig"><b v-if="i === 1">+</b></span>
                  <span class="lname"><i v-fit="l[1]">{{ l[0] }}</i></span>
                  <svg class="ic eye" viewBox="0 0 16 16" v-html="icons.eye" />
                  <svg class="ic" viewBox="0 0 16 16" v-html="icons.magnet" />
                  <span class="swatch" :style="{ background: l[2] }"></span>
                  <span class="count">{{ l[3] }}</span>
                </div>
              </div>
            </div>
            <div class="pane-tabs">
              <span v-for="t in paneTabs" :key="t.a" class="tx" :class="t.cls" :style="{ marginLeft: t.gap + 'px', width: t.size + 'px' }"><i v-fit="t.size">{{ t.s }}</i></span>
            </div>
          </aside>

          <section class="docs">
            <div class="doc-tabs">
              <span v-for="t in docTabs" :key="t.a" class="tx" :style="{ marginLeft: t.gap + 'px', width: t.size + 'px' }"><i v-fit="t.size">{{ t.s }}</i></span>
              <span class="doc-cur"><span class="tx bold" style="width: 55px"><i v-fit="55">P2S - 1.cad</i></span><svg class="ic" viewBox="0 0 16 16" v-html="icons.x" /></span>
              <svg class="scrolls" width="26" height="12" viewBox="0 0 26 12" fill="none" stroke="#626262"><path d="M6 1v9L1.500 5.500zM20 1v9l4.500-4.500z" /></svg>
            </div>
            <div class="frame">
              <div class="view">
                <svg class="canvas" viewBox="330 122 1541 825">
                  <defs>
                    <linearGradient id="pg" gradientUnits="userSpaceOnUse" x1="1071.800" y1="505.400" x2="1082.100" y2="517.400">
                      <stop offset="0" stop-color="#a80000" /><stop offset=".18" stop-color="#f80000" /><stop offset=".62" stop-color="#f00" /><stop offset=".82" stop-color="#b00000" /><stop offset="1" stop-color="#300" />
                    </linearGradient>
                  </defs>
                  <g shape-rendering="crispEdges">
                    <path d="M867.500 680.500L1315 298l8 3 1 9-446 382.500z" fill="url(#pg)" />
                    <path d="M1311 300.500l3-3.500c3-3 9-2 12 2 3 5 2 11-2 14h-4c3-5-1-14-9-12.500z" fill="#444" />
                    <path d="M1311 301c7-3 13 5 11 12" fill="none" stroke="#181818" />
                    <ellipse cx="1077" cy="580.500" rx="27" ry="18.500" fill="none" stroke="#000" stroke-width="2.500" />
                    <ellipse cx="1076.500" cy="580.500" rx="17.500" ry="12" fill="#000" />
                  </g>
                  <path d="M1069 530c-2 6 3 10 12 9M1082 517c4 2 4 4 2 7" fill="none" stroke="#f0f" stroke-dasharray="3 1.500" />
                  <path d="M1076.500 520v17" stroke="#b800c0" stroke-width="6.500" />
                  <path d="M1079 553C1081 562 1089 562 1093 554 1098 543 1101 528 1109 523 1116 528 1113 551 1104 552 1098 553 1092 549 1087 546" fill="none" stroke="#2a2a2a" stroke-width="7" stroke-linejoin="round" />
                  <path d="M1079 553C1081 562 1089 562 1093 554 1098 543 1101 528 1109 523 1116 528 1113 551 1104 552 1098 553 1092 549 1087 546" fill="none" stroke="#666" stroke-width="4.500" stroke-linejoin="round" />
                  <path d="M1072 536h8" stroke="#555" stroke-width="3" />
                  <path d="M1074 539l16 10" stroke="#555" stroke-width="7" /><path d="M1074 539l14 8" stroke="#ccc" stroke-width="5" />
                  <path d="M1077 551v22" stroke="#4a4a4a" stroke-width="8" /><path d="M1075.500 551v22" stroke="#6b6b6b" stroke-width="4" />
                  <path d="M1072 551l2-3h5l3 4-4 2zM1106 523l4-3 4 3-3 3z" fill="#111" />
                  <path d="M1064 511l5-2 6-7 4-3c6 0 10 5 10 10l-3 6-7 3-3 5-3 0c0-6-3-10-9-12z" fill="#444" stroke="#1c1c1c" />
                  <path d="M1064 511c7-2 13 5 12 12M1076 501c6 1 9 6 10 13" fill="none" stroke="#151515" stroke-width="1.800" />
                  <path d="M863.500 687V640l-7.500-4 15.500-20L887 653l-8-4v38" fill="none" stroke="#22228a" />
                  <path d="M864 683l37-32-7-4 40.500-13-9.500 30-8-4-31 25" fill="none" stroke="#187818" />
                  <path d="M864 692l47 27-5 6 43 6-18-27-6 5-40-22" fill="none" stroke="#8a2222" />
                  <circle cx="868" cy="688" r="6.500" fill="#fff" stroke="#777" />
                  <ellipse cx="873" cy="687" rx="8" ry="8" fill="#111" stroke="#333" />
                  <path d="M872 687l-6-6 4-2 5 2 5 1zM872 688l-5 4M873 688l8 3v-8z" fill="#555" />
                  <path d="M868 694c3 4 9 3 11-1" fill="none" stroke="#33a" />
                </svg>
                <b class="vmark"></b>
                <b class="hmark"></b>
              </div>
              <div class="sheets">
                <svg v-for="d in nav" :key="d" class="nav" width="13" height="14" viewBox="0 0 13 14"><path :d="d" fill="#333" stroke="#333" /></svg>
                <span class="model"><i v-fit="40">*Model</i></span>
                <span class="sheet"><i v-fit="37">Sheet 1</i></span>
              </div>
            </div>
          </section>
        </div>
        <footer class="status">
          <span class="tx msg"><i v-fit="182">Increases the camera magnification.</i></span>
          <span v-for="(s, i) in status" :key="i" class="cell" :style="{ width: s[1] + 'px' }"><i v-if="s[0]" v-fit="s[2]">{{ s[0] }}</i></span>
        </footer>
      </div>

      <div class="side">
        <template v-for="(s, si) in side" :key="si">
          <section class="vseg" :style="{ height: s.w + 'px' }">
            <b class="vgrip"></b>
            <template v-for="it in s.items" :key="it.a">
              <svg v-if="it.n" class="ic" viewBox="0 0 16 16" :style="{ marginTop: it.gap + 'px' }" v-html="icons[it.n]" />
              <b v-else-if="it.sep" class="hsep" :style="{ marginTop: it.gap + 'px' }"></b>
              <span v-else class="vt" :class="it.cls" :style="{ marginTop: it.gap + 'px', height: it.size + 'px' }">{{ it.s }}</span>
            </template>
          </section>
          <div class="vcap" :style="{ height: s.cap + 'px' }"><svg width="8" height="7" viewBox="0 0 8 7"><path d="M1.500 0v6" stroke="#fff" /><path d="M4 0v7l4-3z" fill="#fff" /></svg></div>
        </template>
      </div>
    </main>

    <div class="strip last">
      <template v-for="(s, si) in row3" :key="si">
        <section class="seg" :style="{ width: s.w + 'px' }">
          <b class="grip"></b>
          <template v-for="it in s.items" :key="it.a">
            <span v-if="it.hot" class="hot" :style="{ marginLeft: it.gap + 'px' }"><svg class="ic" viewBox="0 0 16 16" v-html="icons[it.n]" /></span>
            <svg v-else-if="it.n" class="ic" viewBox="0 0 16 16" :style="{ marginLeft: it.gap + 'px' }" v-html="icons[it.n]" />
            <b v-else-if="it.box" class="entry" :style="{ marginLeft: it.gap + 'px', width: it.size + 'px' }"></b>
            <span v-else class="tx" :class="it.cls" :style="{ marginLeft: it.gap + 'px', width: it.size + 'px' }"><i v-fit="it.cls === 'on' ? it.size - 8 : it.size">{{ it.s }}</i></span>
          </template>
        </section>
        <div class="cap" :style="{ width: s.cap + 'px' }"><svg width="7" height="8" viewBox="0 0 7 8"><path d="M0 1.500h6" stroke="#fff" /><path d="M1 4h6L4 7.500z" fill="#fff" /></svg></div>
      </template>
    </div>

    <div class="tip">
      <svg class="ic" viewBox="0 0 16 16" v-html="icons.zoomIn" />
      <div class="tip-body">
        <strong><i v-fit="139">Zoom Camera In (Page up)</i></strong>
        <span><i v-fit="182">Increases the camera magnification.</i></span>
      </div>
    </div>
  </div>
</template>

<style>
body { background: #525252; }
</style>

<style scoped>
.app { position: relative; width: 1920px; height: 1032px; overflow: hidden; display: flex; flex-direction: column; background: #525252; font: 12px/16px "Open Sans", "Noto Sans", sans-serif; color: #0c0c10; }
.app * { box-sizing: border-box; }
i { display: inline-block; font-style: normal; white-space: pre; transform-origin: 0 50%; flex: none; }
.ic { width: 16px; height: 16px; flex: none; display: block; overflow: visible; }
.tx { flex: none; display: flex; align-items: center; height: 16px; }
.dim { color: #8a8d94; }
.bold { font-weight: 700; }
.title { height: 23px; flex: none; display: flex; align-items: center; padding-left: 2px; background: linear-gradient(90deg, #fbf1ef, #f8f1f0 35%, #f2f2f2 60%); }
.title-text { margin-left: 6px; width: 798px; }
.winctl { margin-left: auto; margin-right: 16px; }
.menu { height: 23px; flex: none; display: flex; align-items: center; color: #fff; padding-bottom: 1px; }
.mdi { margin: 6px 5px 0 auto; }
.strip { height: 25px; flex: none; display: flex; align-items: flex-start; }
.seg { height: 24px; display: flex; flex: none; align-items: center; border-radius: 0 3px 0 0; background: linear-gradient(#d0d3da, #c3c7cf 45%, #9aa2af); }
.cap + .seg { margin-left: 1px; border-radius: 3px 3px 0 0; }
.cap { height: 24px; flex: none; background: linear-gradient(#929aa6, #6b717d 60%, #565b66); display: flex; align-items: flex-end; justify-content: center; padding-bottom: 1px; border-radius: 0 3px 3px 0; }
.grip { width: 2px; height: 12px; margin: 0 3px 0 4px; flex: none; background: repeating-linear-gradient(#3f4147 0 2px, transparent 2px 4px); }
.main { flex: none; height: 911px; display: flex; }
.work { width: 1894px; display: flex; flex-direction: column; }
.body { height: 892px; display: flex; border-top: 1px solid #a0a0a0; }
.pane { width: 323px; padding-right: 4px; flex: none; }
.pane-box { height: 868px; background: #f0f0f0; padding: 0 3px; display: flex; flex-direction: column; }
.pane-title { height: 19px; margin: 0 -2px; background: #9da09e; display: flex; align-items: center; padding: 0 0 1px 3px; color: #3e3e3e; }
.pane-title .tx { margin-right: 250px; }
.pane-title .ic + .ic { margin-left: 1px; }
.pane-tools { height: 23px; margin-top: 3px; flex: none; display: flex; align-items: center; background: linear-gradient(#ced1d8, #bcc0c8 45%, #969eab); }
.vsep { width: 1px; height: 13px; background: #f4f4f4; box-shadow: -1px 0 #868c97; }
.cols { height: 19px; flex: none; display: flex; background: linear-gradient(#f6f6f6, #dfe0e1); border-bottom: 1px solid #d4d4d4; }
.col { border-right: 1px solid #bdbdbd; padding-left: 5px; line-height: 20px; flex: none; overflow: hidden; }
.rows { flex: 1; background: #fff; }
.lrow { height: 17px; display: flex; align-items: center; }
.twig { width: 17px; height: 17px; background: linear-gradient(#999, #999) 8px 8px / 6px 1px no-repeat, linear-gradient(#aaa, #aaa) 7px 0 / 1px 17px no-repeat; }
.lrow:first-child .twig { background-position: 8px 8px, 7px 9px; }
.lrow:last-child .twig { background-size: 6px 1px, 1px 9px; }
.twig b { display: block; margin: 4px 0 0 3px; width: 9px; height: 9px; border: 1px solid #888; background: #fff; font: 700 9px/7px "DejaVu Sans", sans-serif; text-align: center; }
.lname { width: 83px; flex: none; }
.eye { margin-right: 5px; }
.lrow .ic { height: 15px; }
.swatch { width: 18px; height: 14px; margin: 0 5px 0 23px; border: 1px solid #999; }
.count { color: #16163a; }
.pane-tabs { height: 23px; padding-top: 3px; display: flex; color: #eee; }
.pane-tabs .cur { color: #222; box-shadow: 0 0 0 3px #dfe1e3; background: #dfe1e3; border-radius: 0 0 3px 3px; }
.docs { flex: 1; display: flex; flex-direction: column; border-left: 2px solid #c4c4c4; }
.doc-tabs { height: 19px; display: flex; align-items: center; color: #f3f3f3; background: #4e4e4e; padding-top: 1px; }
.doc-cur { margin: 1px 0 0 10px; width: 83px; height: 17px; display: flex; align-items: center; padding-left: 4px; color: #000; background: linear-gradient(#e9ebec, #d7dadd); border: 1px solid #c5dfe4; border-bottom: 0; border-radius: 4px 4px 0 0; }
.doc-cur .tx { margin-top: -2px; }
.doc-cur .ic { margin-left: 5px; }
.scrolls { margin-left: auto; margin-right: 6px; }
.frame { flex: 1; border: solid #f1f1f1; border-width: 3px 7px 7px 2px; background: #777; padding: 3px 0 0 3px; display: flex; flex-direction: column; box-shadow: inset 0 0 0 1px #a2a2a2; }
.view { width: 1557px; height: 841px; background: #f0f0f0; position: relative; }
.canvas { width: 1541px; height: 825px; display: block; background: #fff; }
.vmark, .hmark { position: absolute; background: #888; }
.vmark { left: 1548px; top: 426px; width: 2px; height: 17px; }
.hmark { left: 750px; top: 832px; width: 17px; height: 2px; }
.sheets { flex: 1; display: flex; align-items: flex-start; background: linear-gradient(#5a5a5a, #777 30%, #7b7b7b); border-top: 2px solid #4a4a4a; }
.nav { background: #e4e4e4; margin-right: 3px; flex: none; }
.model { margin-left: 4px; width: 54px; height: 16px; padding-left: 6px; background: #f8f8f8; font-weight: 700; clip-path: polygon(0 0, 100% 0, 85% 100%, 4% 100%); line-height: 16px; flex: none; }
.sheet { margin-left: -6px; width: 62px; height: 16px; padding-left: 11px; background: #c9cbce; clip-path: polygon(15% 0, 100% 0, 78% 100%, 0 100%); flex: none; }
.status { height: 19px; display: flex; align-items: center; color: #fff; background: linear-gradient(#414856, #3d4350 37%, #2e2e2e 38%, #343434); padding-top: 3px; }
.msg { width: 1542px; margin-left: 4px; }
.cell { height: 16px; border-left: 1px solid #777; padding-left: 3px; flex: none; display: flex; align-items: center; }
.side { width: 26px; padding: 1px 0 0 1px; background: #545454; }
.vseg { width: 25px; padding-right: 1px; display: flex; flex-direction: column; align-items: center; border-radius: 3px 3px 0 0; background: linear-gradient(90deg, #d0d4db, #c2c6ce 45%, #969eab); }
.vseg > * { margin-left: -1px; }
.vcap { width: 25px; display: flex; align-items: center; justify-content: flex-end; padding-right: 2px; background: linear-gradient(90deg, #565b66, #7a818d 60%, #a1a8b3); }
.vgrip { width: 14px; height: 2px; margin: 4px 0 2px; flex: none; background: repeating-linear-gradient(90deg, #3f4147 0 2px, transparent 2px 4px); }
.hsep { width: 14px; height: 1px; background: #fff; box-shadow: 0 -1px #868c97; flex: none; }
.vt { writing-mode: vertical-rl; font: 12px/16px "Liberation Sans", Arial, sans-serif; white-space: nowrap; flex: none; color: #222; }
.vt.on { width: 21px; line-height: 18px; padding-top: 5px; border: 1px solid #9a9a9a; background: linear-gradient(90deg, #fbd3a0, #fdb050 40%, #fee27e); }
.seg .on { height: 21px; padding-left: 3px; border: 1px solid #b9a88c; background: linear-gradient(#fce0bd, #fdc682 40%, #fbb95a 50%, #fee69b); }
.hot { width: 20px; height: 20px; display: flex; align-items: center; justify-content: center; background: linear-gradient(#fff4d4, #ffdf8c); border: 1px solid #e0bd68; flex: none; }
.entry { height: 16px; background: #fff; flex: none; }
.tip { position: absolute; left: 835px; top: 975px; width: 216px; height: 41px; display: flex; padding: 1px 0 0 4px; border: 1px solid #767676; border-top-color: #ddd; border-left-color: #ddd; background: linear-gradient(#fff, #e0e2e8); color: #4c4c4c; }
.tip-body { margin-left: 6px; display: flex; flex-direction: column; align-items: flex-start; gap: 3px; }
.tip-body > * { display: flex; height: 16px; }
</style>
